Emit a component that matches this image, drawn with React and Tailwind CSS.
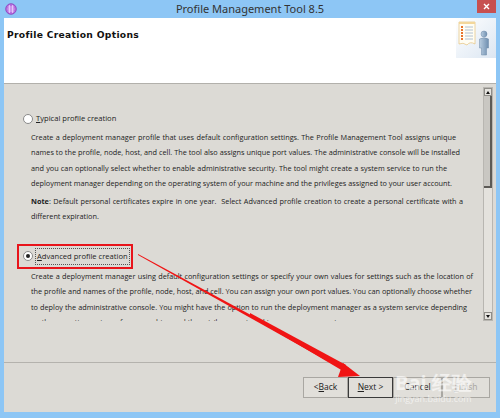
import React from 'react';

const body = { fontFamily: '"Open Sans", "Noto Sans", sans-serif' };

const Radio = ({ checked }) => (
  <span className="flex h-[10px] w-[10px] shrink-0 items-center justify-center rounded-full border border-[#8a8a8a] bg-white">
    {checked && <span className="h-[4px] w-[4px] rounded-full bg-[#222]" />}
  </span>
);

// one line of wrapped text, stretched to the width it has in the dialog
const Line = ({ w, children, className = '' }) => (
  <div className={`whitespace-nowrap [text-align-last:justify] ${className}`} style={{ width: w }}>
    {children}
  </div>
);

const HeaderIcon = () => (
  <svg width="40" height="40" viewBox="0 0 40 40" className="absolute right-0 top-0">
    <defs>
      <linearGradient id="bg" x1="0" y1="0" x2="1" y2="1">
        <stop offset="0" stopColor="#ffffff" />
        <stop offset="1" stopColor="#dbe6f2" />
      </linearGradient>
      <linearGradient id="man" x1="0" y1="0" x2="1" y2="0">
        <stop offset="0" stopColor="#b9cde0" />
        <stop offset="1" stopColor="#6f8fb0" />
      </linearGradient>
    </defs>
    <rect x="0" y="0" width="40" height="40" fill="url(#bg)" />
    <path d="M3 4 H19 V26 Q14 23 11 27 Q7 24 3 26 Z" fill="#fffdf3" stroke="#e9c98a" strokeWidth="0.8" />
    <rect x="3" y="4" width="16" height="2" fill="#f3d79b" />
    {[9, 12, 15, 18, 21].map((y) => (
      <g key={y}>
        <rect x="5" y={y - 1} width="2" height="2" fill="#e8742c" />
        <line x1="9" y1={y} x2="17" y2={y} stroke="#9fb3c9" strokeWidth="0.8" />
      </g>
    ))}
    <circle cx="28" cy="16" r="3" fill="url(#man)" stroke="#6d88a6" strokeWidth="0.5" />
    <path d="M23.5 21 Q28 18.5 32.5 21 V30 H30.5 V37 H25.5 V30 H23.5 Z" fill="url(#man)" stroke="#6d88a6" strokeWidth="0.5" />
  </svg>
);

const Btn = ({ children, def, disabled, w }) => (
  <div
    className={`flex h-[21px] items-center justify-center bg-[#e1dfda] text-[8.5px] ${w} ${
      def ? 'border border-[#3a3a3a]' : 'border border-[#a9a7a2]'
    } ${disabled ? 'text-[#a6a49f]' : 'text-[#222]'}`}
    style={body}
  >
    {children}
  </div>
);

export default function App() {
  return (
    <div className="relative flex h-[418px] w-[500px] flex-col overflow-hidden bg-[#8dc6f5]">
      {/* title bar */}
      <div className="relative flex h-[18px] items-center justify-center">
        <svg width="12" height="12" viewBox="0 0 12 12" className="absolute left-[5px] top-[3px]">
          <circle cx="6" cy="6" r="5.3" fill="#b870e0" stroke="#8a3cb8" strokeWidth="0.8" />
          <path d="M3 4 H9 M2.5 6 H9.5 M3 8 H9 M4.5 2 V10 M7.5 2 V10" stroke="#efd8ff" strokeWidth="0.7" />
        </svg>
        <span className="text-[11px] text-[#333]" style={{ fontFamily: '"Noto Sans", "Open Sans", sans-serif' }}>
          Profile Management Tool 8.5
        </span>
        <div className="absolute right-[4px] top-0 flex h-[13px] w-[19px] items-center justify-center bg-[#c75050]">
          <svg width="7" height="7" viewBox="0 0 7 7">
            <path d="M1 1 L6 6 M6 1 L1 6" stroke="#fff" strokeWidth="1.4" />
          </svg>
        </div>
      </div>

      <div className="mx-[4px] mb-[6px] flex flex-1 flex-col">
        {/* header */}
        <div className="relative h-[66px] border-b border-[#b2b0ab] bg-white">
          <div
            className="pl-[3px] pt-[10px] text-[9.2px] font-bold tracking-[0.3px] text-[#111]"
            style={{ fontFamily: '"DejaVu Sans", sans-serif' }}
          >
            Profile Creation Options
          </div>
          <HeaderIcon />
        </div>

        {/* content */}
        <div className="flex flex-1 flex-col bg-[#dcdad5]">
          <div className="mt-[3px] flex h-[234px]">
            <div className="flex-1 overflow-hidden text-[7.3px] leading-[15.5px] text-[#222]" style={body}>
              <div className="flex items-center gap-[3px] pl-[19px] pt-[24px]">
                <Radio />
                <span className="whitespace-nowrap text-[7.6px]">
                  <span className="underline">T</span>ypical profile creation
                </span>
              </div>
              <div className="pl-[27px] pt-[3px]">
                <Line w="425px">Create a deployment manager profile that uses default configuration settings. The Profile Management Tool assigns unique</Line>
                <Line w="429px">names to the profile, node, host, and cell. The tool also assigns unique port values. The administrative console will be installed</Line>
                <Line w="416px">and you can optionally select whether to enable administrative security. The tool might create a system service to run the</Line>
                <Line w="421px">deployment manager depending on the operating system of your machine and the privileges assigned to your user account.</Line>
                <Line w="432px" className="pt-[2px]">
                  <span className="font-bold">Note</span>: Default personal certificates expire in one year.&nbsp; Select Advanced profile creation to create a personal certificate with a
                </Line>
                <div className="whitespace-nowrap">different expiration.</div>
              </div>
              <div className="ml-[13px] mt-[19px] flex h-[25px] w-[116px] items-center border-2 border-[#e8141b] pl-[4px]">
                <Radio checked />
                <span className="ml-[2px] whitespace-nowrap border border-dotted border-[#555] px-[1px] text-[7.6px] leading-[15px]">
                  <span className="underline">A</span>dvanced profile creation
                </span>
              </div>
              <div className="pl-[27px]">
                <Line w="442px">Create a deployment manager using default configuration settings or specify your own values for settings such as the location of</Line>
                <Line w="441px">the profile and names of the profile, node, host, and cell. You can assign your own port values. You can optionally choose whether</Line>
                <Line w="436px">to deploy the administrative console. You might have the option to run the deployment manager as a system service depending</Line>
                <div className="whitespace-nowrap">on the operating system of your machine and the privileges assigned to your user account.</div>
              </div>
            </div>
            {/* scrollbar */}
            <div className="mr-[3px] flex w-[10px] flex-col border border-[#b8b6b1] bg-[#e4e2dd]">
              <div className="flex h-[8px] items-center justify-center border border-[#8f8d88] bg-[#e6e4df]">
                <span className="h-0 w-0 border-x-[2.5px] border-b-[3px] border-x-transparent border-b-[#111]" />
              </div>
              <div className="h-[92px] border-b-2 border-r-2 border-[#5c5a56] bg-[#c9c7c2]" />
              <div className="flex-1" />
              <div className="flex h-[8px] items-center justify-center border border-[#8f8d88] bg-[#e6e4df]">
                <span className="h-0 w-0 border-x-[2.5px] border-t-[3px] border-x-transparent border-t-[#111]" />
              </div>
            </div>
          </div>

          <div className="mt-[41px] border-t border-[#b4b2ad]" />

          <div className="flex justify-end pr-[6px] pt-[14px]">
            <Btn w="w-[45px]">
              &lt; <span className="underline">B</span>ack
            </Btn>
            <Btn w="w-[45px]" def>
              <span className="underline">N</span>ext &gt;
            </Btn>
            <Btn w="w-[49px]">Cancel</Btn>
            <Btn w="w-[48px]" disabled>
              <span className="underline">F</span>inish
            </Btn>
          </div>
        </div>
      </div>

      {/* red annotation arrow */}
      <svg width="500" height="418" className="pointer-events-none absolute left-0 top-0">
        <polygon points="138,254 349,368 347,372 138,255" fill="#f01414" />
        <polygon points="343,363 360,376 338,377" fill="#f01414" />
        <polygon points="250,313 346,365 343,371 250,316" fill="#f01414" />
      </svg>

      {/* watermark */}
      <div className="pointer-events-none absolute left-[395px] top-[372px] flex flex-col items-center text-white opacity-60" style={body}>
        <span className="text-[20px] font-bold leading-[22px]">Bai 经验</span>
        <span className="text-[9px] leading-[10px]">jingyan.baidu.com</span>
      </div>
    </div>
  );
}
